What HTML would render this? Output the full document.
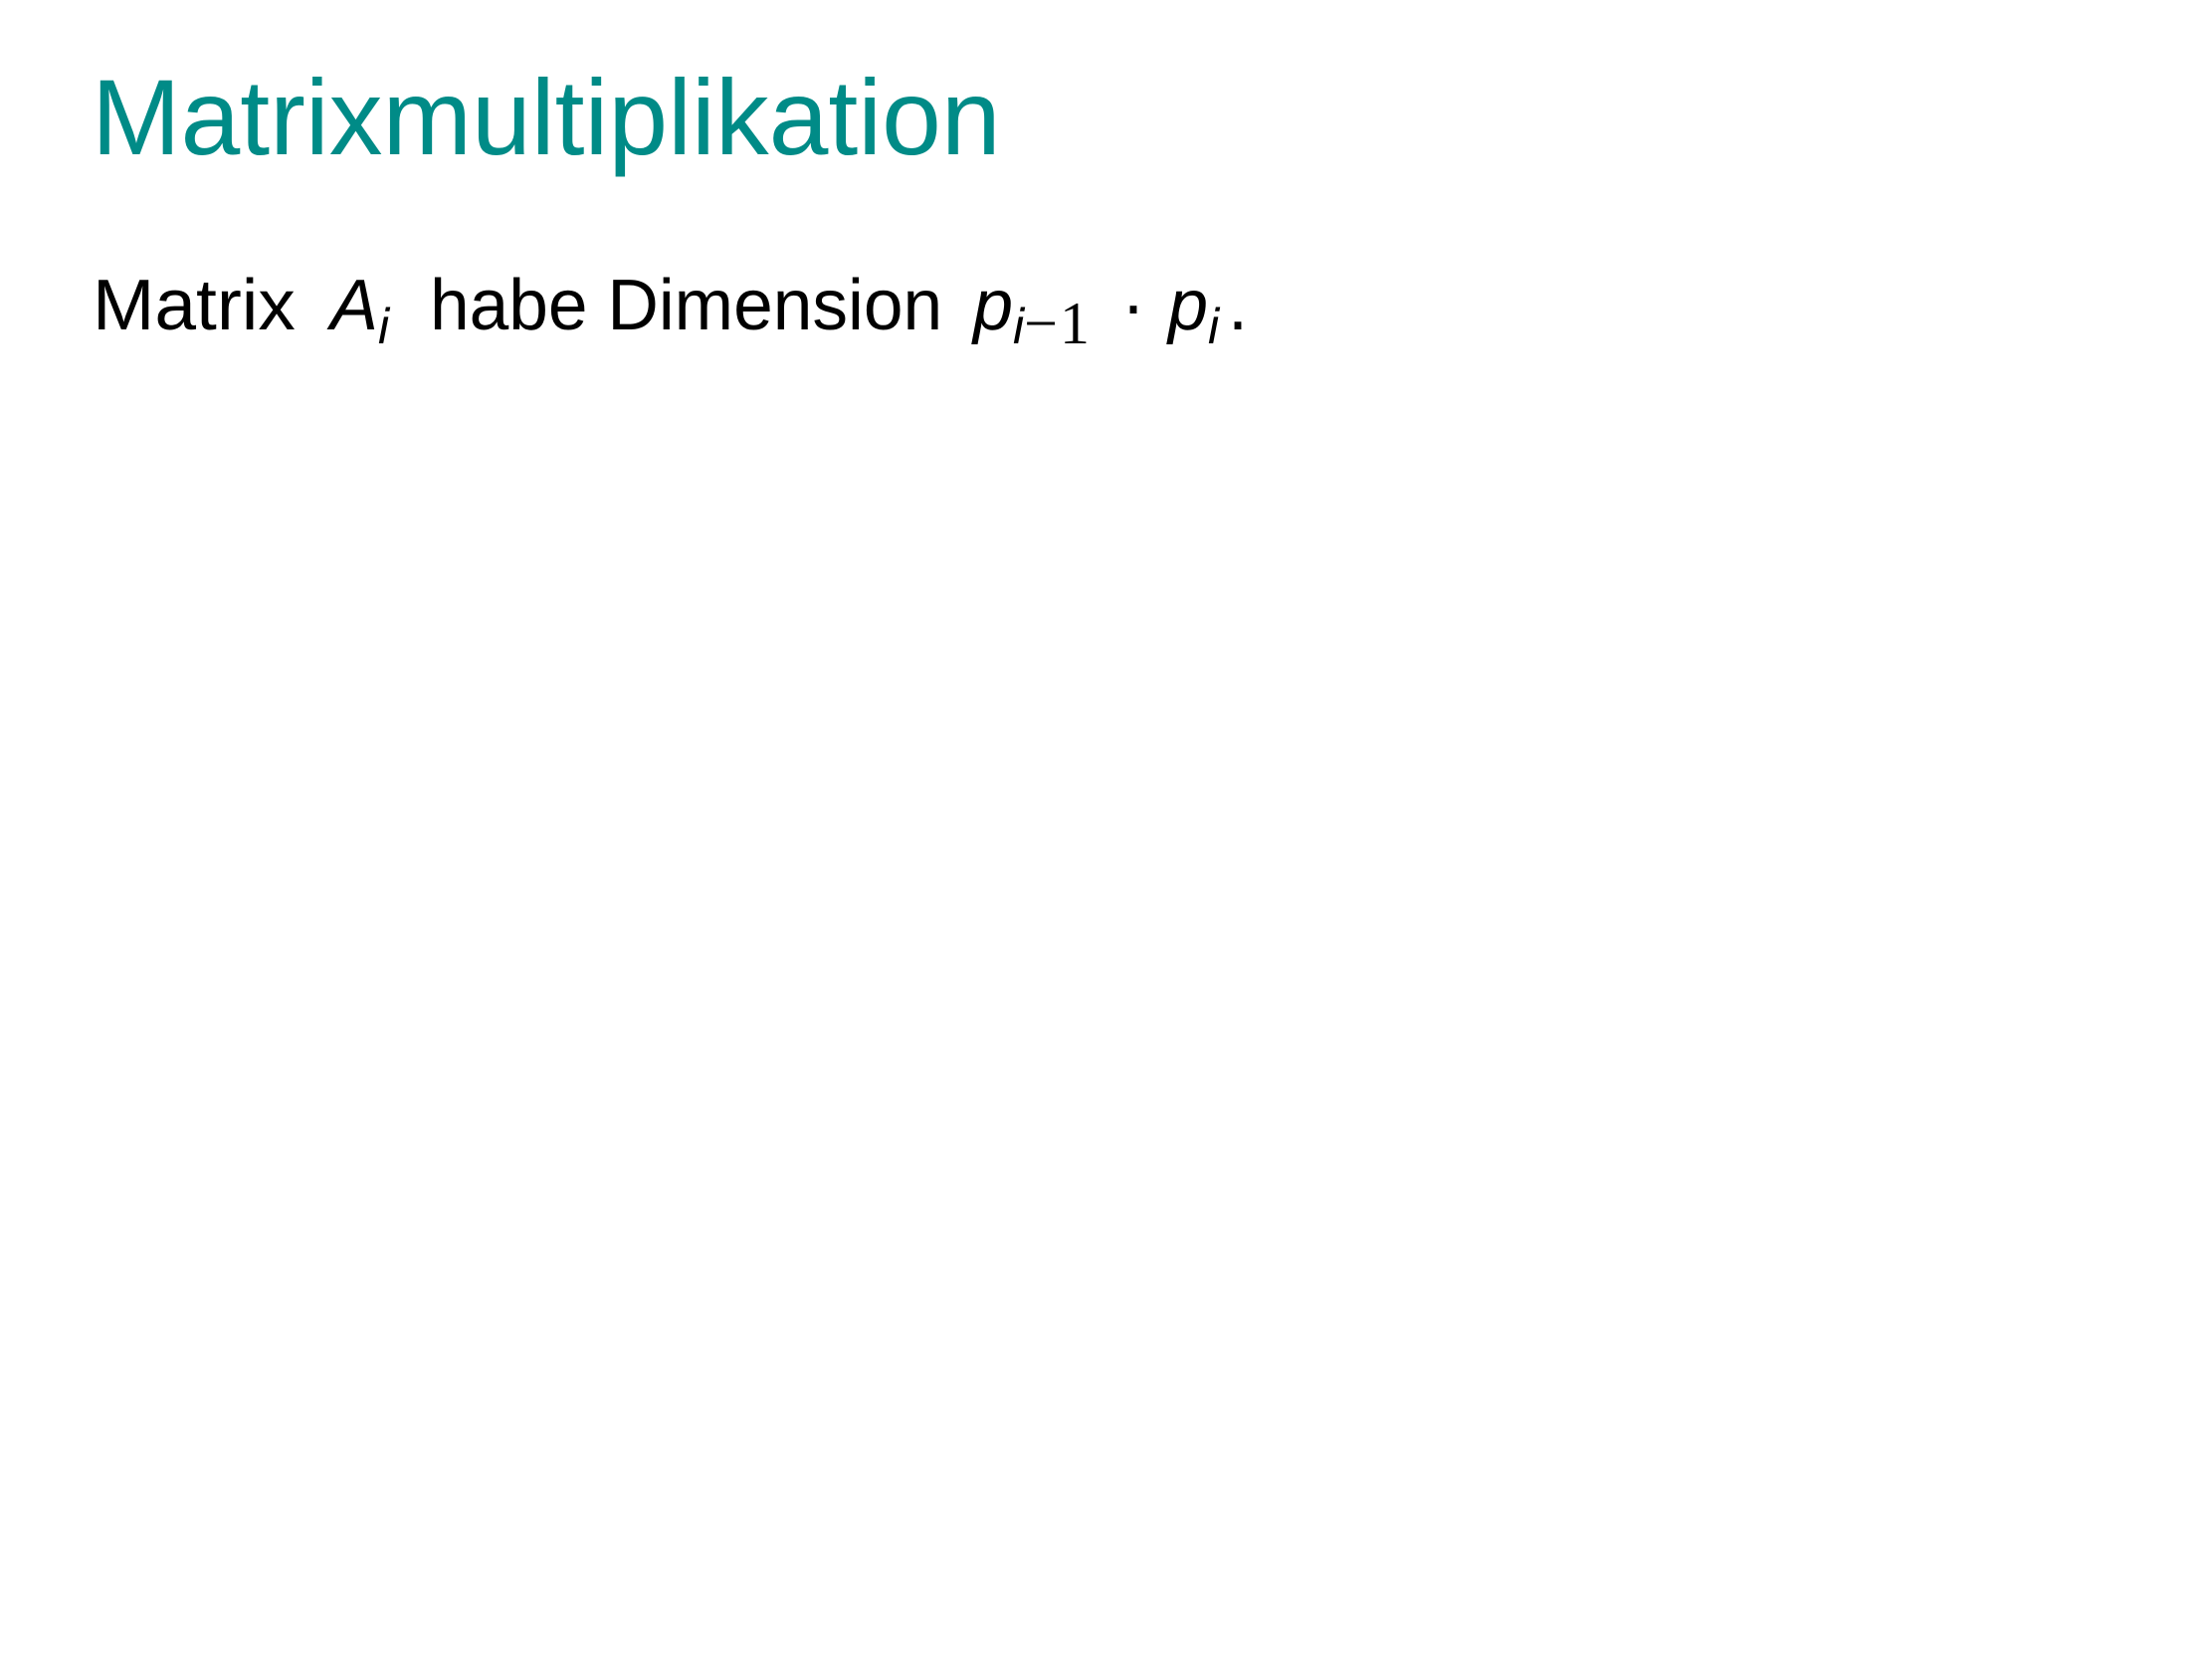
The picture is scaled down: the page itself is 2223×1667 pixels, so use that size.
<!DOCTYPE html>
<html><head><style>
body{margin:0;width:2223px;height:1667px;background:#fff;position:relative;overflow:hidden;font-family:"Liberation Sans",sans-serif}
.t{position:absolute;left:92px;top:64px;font-size:108px;color:#008b87;line-height:1;white-space:nowrap;transform:scaleX(0.995);transform-origin:left}
.b{position:absolute;left:0;top:271px;font-size:72px;color:#000;line-height:1;white-space:nowrap;width:2223px;height:100px}
.b>span{position:absolute;top:0}
sub{font-size:50px;vertical-align:-14px;line-height:0}
i{font-style:italic}
</style></head><body>
<div class="t">Matrixmultiplikation</div>
<div class="b">
<span style="left:93px;transform:scaleX(1.04);transform-origin:left">Matrix</span>
<span style="left:332px"><i>A</i><sub><i>i</i></sub></span>
<span style="left:432px;transform:scaleX(0.99);transform-origin:left">habe Dimension</span>
<span style="left:978px"><i>p</i><sub><i>i</i><span style="font-family:'Liberation Serif',serif;font-size:60px;letter-spacing:2px">−1</span></sub></span>
<span style="left:1127px">·</span>
<span style="left:1174px"><i>p</i><sub><i>i</i></sub></span>
<span style="left:1234px">.</span>
</div>
</body></html>
